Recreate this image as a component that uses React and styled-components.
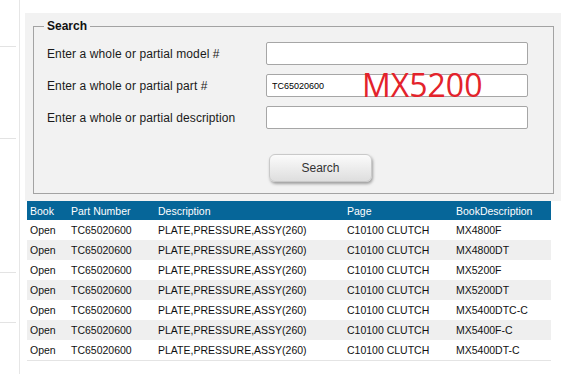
import React from 'react';
import styled, { createGlobalStyle } from 'styled-components';

const rows = [
	{ book: 'Open', part: 'TC65020600', desc: 'PLATE,PRESSURE,ASSY(260)', page: 'C10100 CLUTCH', bookDesc: 'MX4800F' },
	{ book: 'Open', part: 'TC65020600', desc: 'PLATE,PRESSURE,ASSY(260)', page: 'C10100 CLUTCH', bookDesc: 'MX4800DT' },
	{ book: 'Open', part: 'TC65020600', desc: 'PLATE,PRESSURE,ASSY(260)', page: 'C10100 CLUTCH', bookDesc: 'MX5200F' },
	{ book: 'Open', part: 'TC65020600', desc: 'PLATE,PRESSURE,ASSY(260)', page: 'C10100 CLUTCH', bookDesc: 'MX5200DT' },
	{ book: 'Open', part: 'TC65020600', desc: 'PLATE,PRESSURE,ASSY(260)', page: 'C10100 CLUTCH', bookDesc: 'MX5400DTC-C' },
	{ book: 'Open', part: 'TC65020600', desc: 'PLATE,PRESSURE,ASSY(260)', page: 'C10100 CLUTCH', bookDesc: 'MX5400F-C' },
	{ book: 'Open', part: 'TC65020600', desc: 'PLATE,PRESSURE,ASSY(260)', page: 'C10100 CLUTCH', bookDesc: 'MX5400DT-C' },
];

const App = () => {
	return (
		<>
			<GlobalStyle />
			<Page>
				<Sidebar>
					<SideItem $h={47} />
					<SideItem $h={92} />
					<SideItem $h={134} />
					<SideItem $h={50} />
				</Sidebar>
				<Main>
					<SearchPanel>
						<SearchBox>
							<Legend>Search</Legend>
							<FieldRow>
								<Label>Enter a whole or partial model #</Label>
								<Input type="text" defaultValue="" />
							</FieldRow>
							<FieldRow>
								<Label>Enter a whole or partial part #</Label>
								<InputWrap>
									<Input type="text" defaultValue="TC65020600" />
									<Note>MX5200</Note>
								</InputWrap>
							</FieldRow>
							<FieldRow>
								<Label>Enter a whole or partial description</Label>
								<Input type="text" defaultValue="" />
							</FieldRow>
							<ButtonRow>
								<span />
								<SearchButton type="button">Search</SearchButton>
							</ButtonRow>
						</SearchBox>
					</SearchPanel>
					<Results>
						<thead>
							<tr>
								<Th $w={38}>Book</Th>
								<Th $w={84}>Part Number</Th>
								<Th $w={186}>Description</Th>
								<Th $w={106}>Page</Th>
								<Th>BookDescription</Th>
							</tr>
						</thead>
						<tbody>
							{rows.map((r, i) => (
								<Row key={i} $alt={i % 2 === 1}>
									<Td>{r.book}</Td>
									<Td>{r.part}</Td>
									<Td>{r.desc}</Td>
									<Td>{r.page}</Td>
									<Td>{r.bookDesc}</Td>
								</Row>
							))}
						</tbody>
					</Results>
				</Main>
			</Page>
		</>
	);
};

const GlobalStyle = createGlobalStyle`
	html, body {
		margin: 0;
		padding: 0;
		background: #fff;
	}
	body {
		font-family: 'Liberation Sans', Arial, sans-serif;
		color: #000;
	}
`;

const Page = styled.div`
	display: flex;
	align-items: flex-start;
	width: 574px;
	height: 374px;
	overflow: hidden;
`;

const Sidebar = styled.div`
	width: 19px;
	height: 374px;
	border-right: 1px solid #e6e6e6;
	box-sizing: content-box;
	flex-shrink: 0;
`;

const SideItem = styled.div`
	width: 16px;
	height: ${(p) => p.$h}px;
	box-sizing: border-box;
	border-bottom: 1px solid #e3e3e3;
`;

const Main = styled.div`
	margin-left: 5px;
	padding-top: 13px;
	width: 536px;
	display: flex;
	flex-direction: column;
`;

const SearchPanel = styled.div`
	background: #f2f2f2;
	padding: 6px 7px 7px 8px;
`;

const SearchBox = styled.fieldset`
	margin: 0;
	padding: 9px 25px 11px 13px;
	border: 1px solid #a3a3a3;
	min-width: 0;
	display: flex;
	flex-direction: column;
	gap: 9px;
`;

const Legend = styled.legend`
	font-size: 12px;
	line-height: 14px;
	font-weight: bold;
	padding: 0 3px;
	margin-left: -3px;
	color: #111;
`;

const FieldRow = styled.div`
	display: grid;
	grid-template-columns: 219px 262px;
	align-items: center;
	height: 23px;
`;

const Label = styled.label`
	font-size: 12px;
	color: #1a1a1a;
	white-space: nowrap;
	letter-spacing: 0.1px;
`;

const InputWrap = styled.div`
	position: relative;
	height: 23px;
`;

const Input = styled.input`
	box-sizing: border-box;
	width: 262px;
	height: 23px;
	margin: 0;
	padding: 1px 5px 0;
	border: 1px solid #a6a6a6;
	border-radius: 2px;
	background: #fff;
	font-family: 'Liberation Sans', Arial, sans-serif;
	font-size: 9px;
	color: #000;
	outline: none;
`;

const Note = styled.span`
	position: absolute;
	left: 96px;
	top: -9px;
	font-family: 'Open Sans', 'Noto Sans', sans-serif;
	font-size: 32px;
	line-height: 40px;
	color: #e3232b;
	pointer-events: none;
`;

const ButtonRow = styled.div`
	display: grid;
	grid-template-columns: 222px 103px;
	margin-top: 16px;
`;

const SearchButton = styled.button`
	width: 103px;
	height: 28px;
	border: 1px solid #c9c9c9;
	border-radius: 6px;
	background: linear-gradient(#fbfbfb, #dedede);
	box-shadow: 1px 2px 3px rgba(0, 0, 0, 0.35);
	font-family: 'Liberation Sans', Arial, sans-serif;
	font-size: 12px;
	color: #333;
	cursor: pointer;
`;

const Results = styled.table`
	margin-left: 2px;
	width: 524px;
	border-collapse: collapse;
	table-layout: fixed;
	border-bottom: 1px solid #e4e4e4;
	font-size: 10.5px;
`;

const Th = styled.th`
	width: ${(p) => (p.$w ? `${p.$w}px` : 'auto')};
	height: 19px;
	padding: 0 0 0 3px;
	background: #066699;
	color: #fff;
	font-weight: normal;
	text-align: left;
	white-space: nowrap;
`;

const Row = styled.tr`
	background: ${(p) => (p.$alt ? '#efefef' : '#fff')};
`;

const Td = styled.td`
	height: 20px;
	padding: 0 0 0 3px;
	color: #111;
	white-space: nowrap;
`;

export default App;
